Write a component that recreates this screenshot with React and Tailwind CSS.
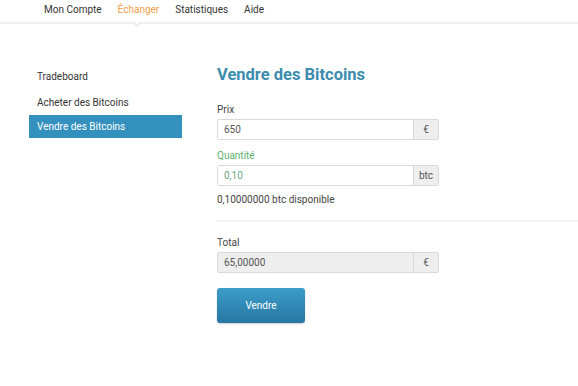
import React from "react";

const Field = ({ label, value, addon, labelClass = "text-[#444]", valueClass = "text-[#555]", disabled = false }) => (
  <div className="w-[222px]">
    <div className={`text-[10px] leading-[14px] mb-[2px] ${labelClass}`}>{label}</div>
    <div className="flex h-[21px] border border-[#d9d9d9] rounded-[2px]">
      <div className={`flex-1 flex items-center px-[6px] text-[10px] ${valueClass} ${disabled ? "bg-[#eeeeee]" : "bg-white"}`}>{value}</div>
      <div className="w-[25px] flex items-center justify-center border-l border-[#d9d9d9] bg-[#eeeeee] text-[10px] text-[#555]">{addon}</div>
    </div>
  </div>
);

export default function App() {
  return (
    <div className="w-[578px] h-[386px] bg-white overflow-hidden font-['Roboto',sans-serif] text-[#333]">
      {/* top nav */}
      <div className="relative h-[24px] border-b-2 border-[#f0f0f0]">
        <div className="flex gap-[16px] pl-[44px] pt-[3px] text-[10px] leading-[14px]">
          <span className="text-[#333]">Mon Compte</span>
          <span className="text-[#f0a04b]">Échanger</span>
          <span className="text-[#333]">Statistiques</span>
          <span className="text-[#333]">Aide</span>
        </div>
        <div className="absolute left-[132px] top-[22px] w-0 h-0 border-l-[5px] border-r-[5px] border-t-[5px] border-l-transparent border-r-transparent border-t-[#e8e8e8]" />
        <div className="absolute left-[133px] top-[21px] w-0 h-0 border-l-[4px] border-r-[4px] border-t-[4px] border-l-transparent border-r-transparent border-t-white" />
      </div>

      <div className="flex pt-[40px]">
        {/* sidebar */}
        <div className="w-[153px] ml-[29px] -mt-[1px] text-[10px]">
          <div className="h-[26px] flex items-center pl-[8px] text-[#333]">Tradeboard</div>
          <div className="h-[26px] flex items-center pl-[8px] text-[#333]">Acheter des Bitcoins</div>
          <div className="h-[23px] flex items-center pl-[8px] bg-[#3490bc] text-white">Vendre des Bitcoins</div>
        </div>

        {/* form */}
        <div className="ml-[35px] flex-1">
          <h1 className="mt-[1px] text-[16.5px] leading-[20px] font-bold text-[#3b8cae]">Vendre des Bitcoins</h1>
          <div className="mt-[18px] flex flex-col gap-[9px]">
            <Field label="Prix" value="650" addon="€" />
            <Field label="Quantité" value="0,10" addon="btc" labelClass="text-[#5cb16f]" valueClass="text-[#6aa982]" />
          </div>
          <div className="mt-[6px] text-[10px] text-[#444]">0,10000000 btc disponible</div>
          <div className="mt-[13px] border-t-2 border-[#f2f2f2]" />
          <div className="mt-[14px]">
            <Field label="Total" value="65,00000" addon="€" disabled />
          </div>
          <button className="mt-[15px] w-[88px] h-[35px] rounded-[3px] bg-gradient-to-b from-[#3d9dc9] to-[#2876a3] text-white text-[10px] shadow-[0_1px_2px_rgba(0,0,0,0.2)]">
            Vendre
          </button>
        </div>
      </div>
    </div>
  );
}
